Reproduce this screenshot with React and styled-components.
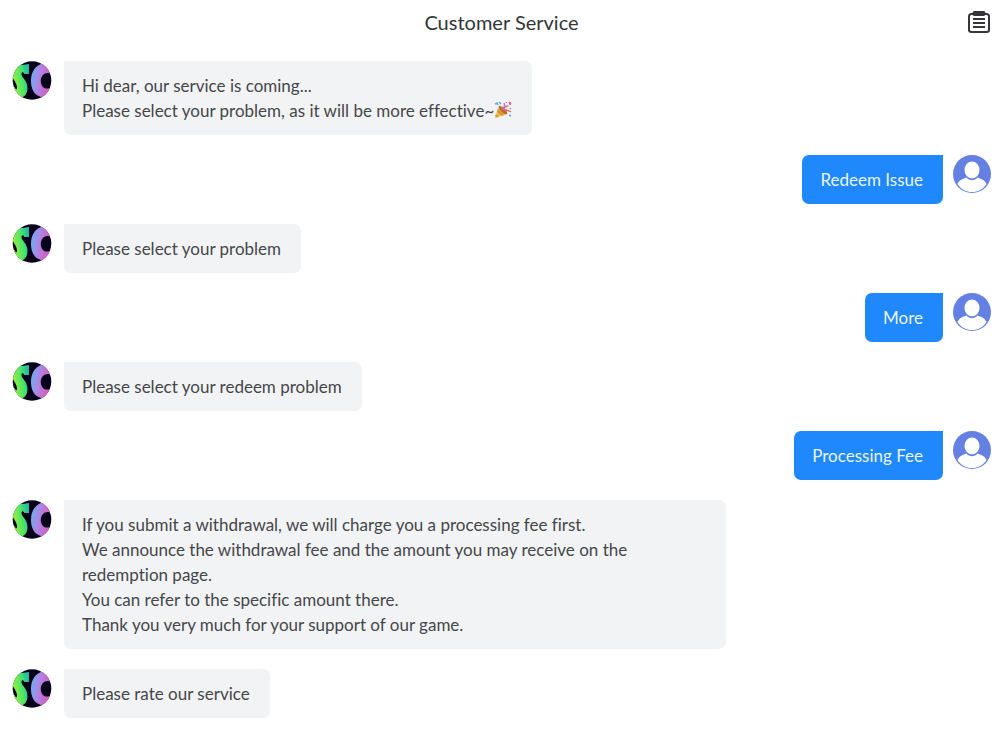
import React from "react";
import styled, { createGlobalStyle, css } from "styled-components";

const GlobalStyle = createGlobalStyle`
  * { box-sizing: border-box; }
  body {
    margin: 0;
    background: #fff;
    color: #45474a;
    font-family: Lato, "Liberation Sans", sans-serif;
    font-size: 17px;
    line-height: 25px;
    font-variant-ligatures: none;
  }
`;

const Page = styled.div`
  display: flex;
  flex-direction: column;
`;

const Header = styled.header`
  display: grid;
  grid-template-columns: 24px 1fr 24px;
  align-items: center;
  padding: 10px 13px 6px;
`;

const Title = styled.h1`
  grid-column: 2;
  margin: 0;
  text-align: center;
  font-size: 20px;
  font-weight: 400;
  line-height: 25px;
  color: #333639;
`;

const IconButton = styled.button`
  display: flex;
  justify-content: flex-end;
  padding: 0;
  border: 0;
  background: none;
  cursor: pointer;
`;

const Conversation = styled.main`
  display: flex;
  flex-direction: column;
  gap: 20px;
  padding: 20px 12px 10px;
`;

const MessageRow = styled.article`
  display: flex;
  align-items: flex-start;
  ${({ $own }) =>
    $own
      ? css`flex-direction: row-reverse; gap: 10px;`
      : css`gap: 12px;`}
`;

const Avatar = styled.svg`
  flex: none;
  width: ${({ $size }) => $size}px;
  height: ${({ $size }) => $size}px;
`;

const Bubble = styled.div`
  max-width: calc(68% - 4px);
  padding: 12px 20px 12px 18px;
  background: ${({ $own }) => ($own ? "#1e88fc" : "#f2f3f5")};
  color: ${({ $own }) => ($own ? "#e9f4ff" : "inherit")};
  border-radius: ${({ $own }) => ($own ? "7px 0 7px 7px" : "0 7px 7px 7px")};
`;

const Line = styled.p`
  margin: 0;
`;

const Emoji = styled.svg`
  width: 18px;
  height: 18px;
  vertical-align: -2px;
`;

function ServiceAvatar({ id }) {
  const green = `green-${id}`;
  const pink = `pink-${id}`;
  const clip = `clip-${id}`;
  return (
    <Avatar $size={40} viewBox="0 0 40 40" role="img" aria-label="Customer service">
      <defs>
        <linearGradient id={green} x1="0" y1="0.6" x2="1" y2="0.3">
          <stop offset="0" stopColor="#a5f03b" />
          <stop offset="0.6" stopColor="#4be566" />
          <stop offset="1" stopColor="#20b9a8" />
        </linearGradient>
        <linearGradient id={pink} x1="0" y1="0" x2="1" y2="0.25">
          <stop offset="0" stopColor="#57b9f2" />
          <stop offset="0.4" stopColor="#a68be8" />
          <stop offset="1" stopColor="#df55bd" />
        </linearGradient>
        <clipPath id={clip}><circle cx="20" cy="19.500" r="19.300" /></clipPath>
      </defs>
      <g clipPath={`url(#${clip})`}>
        <rect width="40" height="40" fill="#08031b" />
        <path d="M17 3V13H12.500C11 10.500 9.500 11 9.500 13C9.500 17 15.500 19 15.500 27C15.500 34 11 38 4 37L0 35V26H2.500C4 29 5 29 5 26.500C5 21 0 19 0 12C0 6 5 3 11 4C13 4 14 3 17 3Z" fill={`url(#${green})`} />
        <path d="M40 4C37 2 33 1 29 3C22 6 19 12 19 20C19 28 22 34 29 36C33 38 37 37 40 35V26C36 28 33 28 31 26C28 23 28 17 31 14C33 12 37 11 40 14Z" fill={`url(#${pink})`} />
      </g>
    </Avatar>
  );
}

function CustomerAvatar() {
  return (
    <Avatar $size={38} viewBox="0 0 38 38" role="img" aria-label="You">
      <circle cx="19" cy="19" r="19" fill="#6580e3" />
      <ellipse cx="19" cy="15" rx="7.500" ry="8.500" fill="#fff" />
      <path d="M4.500 29C6 25 10 24 13.500 22.500C16.500 26 21.500 26 24.500 22.500C28 24 32 25 33.500 29C30 34.500 25 37 19 37S8 34.500 4.500 29Z" fill="#fff" />
    </Avatar>
  );
}

function ClipboardIcon() {
  return (
    <svg width="22" height="23" viewBox="0 0 22 23" fill="none" stroke="#34363b" strokeWidth="2" aria-hidden="true">
      <path d="M5 3H3.500Q1 3 1 5.500V19Q1 21 3.500 21H18.500Q21 21 21 19V5.500Q21 3 18.500 3H17" />
      <rect x="5.500" y="1" width="11" height="3" rx="1" fill="#34363b" />
      <path d="M5 8h12M5 12h12M5 16h12" />
    </svg>
  );
}

function PartyPopper() {
  return (
    <Emoji viewBox="0 0 18 18" role="img" aria-label="party popper">
      <path d="M5 5 1 17 13 13z" fill="#f2bd45" />
      <path d="m4 8 6 6-2 1-5-4zM2 13l3 3-2 .5-2-2z" fill="#dc9032" />
      <ellipse cx="9" cy="9" rx="2.300" ry="5.600" transform="rotate(-45 9 9)" fill="#b86f30" />
      <path d="M8 8q4-2 2-6M9.500 9q1-4 5-4" fill="none" stroke="#ce6bc9" strokeWidth="1.500" />
      <path d="M10 10q3-2 7 1" fill="none" stroke="#eb6268" strokeWidth="1.500" />
      <path d="m1 3 2-1 1 2M5 1l2 2" fill="none" stroke="#58aee8" strokeWidth="1.400" />
      <path d="m15 1 2 1-1 2zM12 1l1 1" fill="#ef5573" stroke="#ef5573" />
      <path d="m16 7 1 1M15 14l2 1" stroke="#55b6df" strokeWidth="1.500" />
      <path d="m12 6 1 1M7 5l1 1" stroke="#f4ca4b" strokeWidth="1.500" />
    </Emoji>
  );
}

const messages = [
  {
    id: "hello",
    lines: [
      "Hi dear, our service is coming...",
      <>Please select your problem, as it will be more effective~<PartyPopper /></>,
    ],
  },
  { id: "redeem", own: true, lines: ["Redeem Issue"] },
  { id: "problem", lines: ["Please select your problem"] },
  { id: "more", own: true, lines: ["More"] },
  { id: "redeem-problem", lines: ["Please select your redeem problem"] },
  { id: "fee", own: true, lines: ["Processing Fee"] },
  {
    id: "fee-answer",
    lines: [
      "If you submit a withdrawal, we will charge you a processing fee first.",
      "We announce the withdrawal fee and the amount you may receive on the redemption page.",
      "You can refer to the specific amount there.",
      "Thank you very much for your support of our game.",
    ],
  },
  { id: "rate", lines: ["Please rate our service"] },
];

export default function App() {
  return (
    <Page>
      <GlobalStyle />
      <Header>
        <Title>Customer Service</Title>
        <IconButton type="button" aria-label="Service records">
          <ClipboardIcon />
        </IconButton>
      </Header>
      <Conversation>
        {messages.map(({ id, own, lines }) => (
          <MessageRow key={id} $own={own}>
            {own ? <CustomerAvatar /> : <ServiceAvatar id={id} />}
            <Bubble $own={own}>
              {lines.map((line, index) => <Line key={index}>{line}</Line>)}
            </Bubble>
          </MessageRow>
        ))}
      </Conversation>
    </Page>
  );
}
